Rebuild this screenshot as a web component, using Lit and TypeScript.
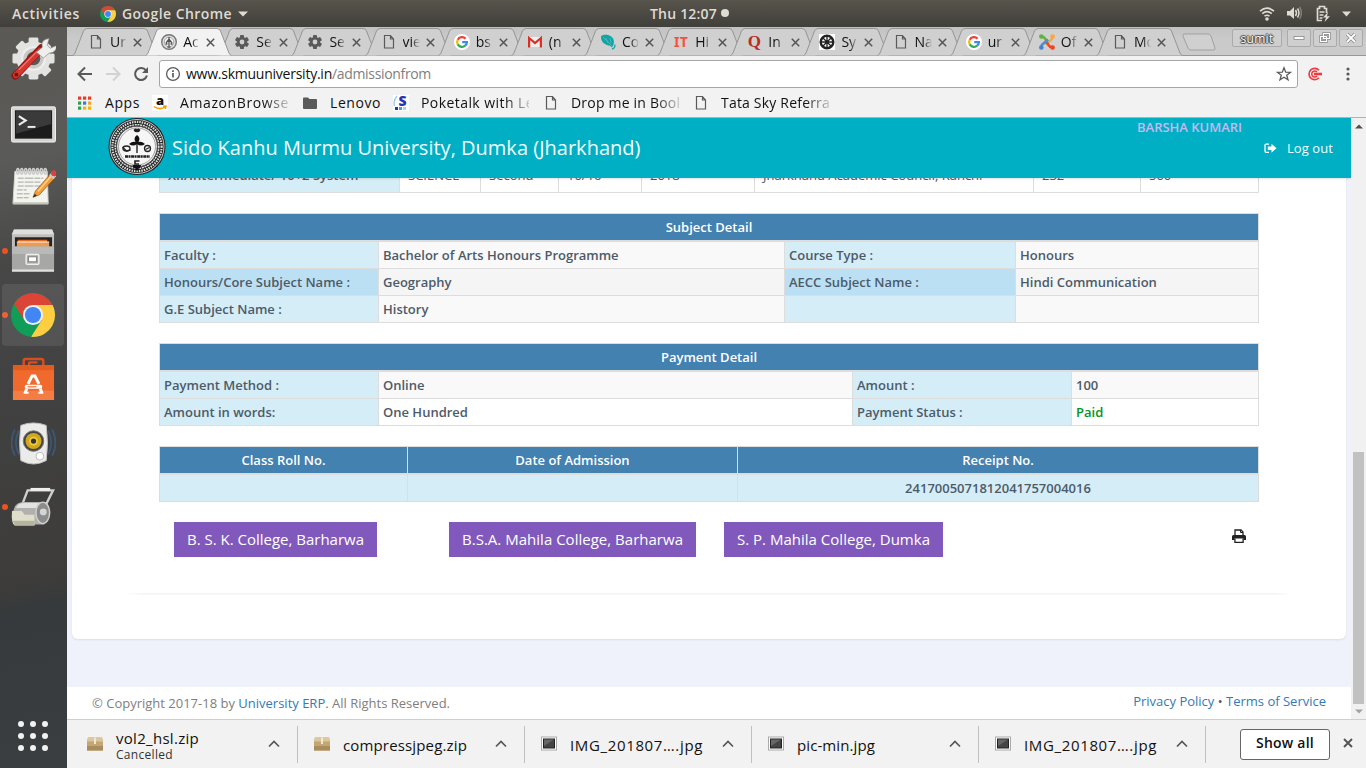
import { LitElement, html, svg, css, nothing } from "lit";
import { customElement, property } from "lit/decorators.js";
import { classMap } from "lit/directives/class-map.js";

/** A single line of text whose tracking is adjusted to fill `w` pixels. */
@customElement("fit-text")
class FitText extends LitElement {
  @property({ type: Number }) w = 0;
  @property() text = "";
  static styles = css`
    :host { display: block; white-space: pre; flex: none; }
    .t { display: inline-block; }
  `;
  firstUpdated() {
    const el = this.renderRoot.querySelector(".t") as HTMLElement;
    const natural = el.getBoundingClientRect().width;
    if (this.w > 0) el.style.letterSpacing = `${(this.w - natural) / this.text.length}px`;
  }
  render() {
    return html`<span class="t">${this.text}</span>`;
  }
}

const fileIcon = html`<svg width="16" height="16" viewBox="0 0 16 16"><path d="M3.5 1.5h6l3 3.500v9h-9zM9.500 1.500v3.500h3" fill="none" stroke="#5a5a5a" stroke-width="1.2"/></svg>`;
const gearIcon = html`<svg width="16" height="16" viewBox="0 0 16 16"><g fill="#5a5a5a"><circle cx="8" cy="8" r="5.200"/>${[0, 60, 120].map((a) => svg`<rect x="6" y="1" width="4" height="14" rx=".8" transform="rotate(${a} 8 8)"/>`)}</g><circle cx="8" cy="8" r="2.400" fill="#d0d0d0"/></svg>`;
const googleIcon = html`<svg width="16" height="16" viewBox="0 0 16 16"><circle cx="8" cy="8" r="8" fill="#fff"/><g fill="none" stroke-width="2.300"><path d="M11.500 4.600A4.900 4.900 0 0 0 3.700 5.700" stroke="#ea4335"/><path d="M3.700 5.700a4.900 4.900 0 0 0 0 4.600" stroke="#fbbc05"/><path d="M3.700 10.300a4.900 4.900 0 0 0 7.500 1.400" stroke="#34a853"/><path d="M11.200 11.700A4.800 4.800 0 0 0 12.900 8.200H8.200" stroke="#4285f4"/></g></svg>`;
const gmailIcon = html`<svg width="16" height="16" viewBox="0 0 16 16"><path d="M2 3h12v10H2z" fill="#eee"/><path d="M2.100 13.500V4L8 9l5.900-5v9.500" fill="none" stroke="#d93025" stroke-width="2.200"/></svg>`;
const leafIcon = html`<svg width="16" height="16" viewBox="0 0 16 16"><path d="M1 2C5-.5 12 1 13.500 5.500c1 3 0 6-1.500 8C10 11 8.500 12 6 10.500 2 8.500 1 6 1 2z" fill="#10a5a5"/><path d="M14.800 10.500c.6 2-.5 4-2.800 4.500" stroke="#10a5a5" stroke-width="1.300" fill="none"/><path d="M3 3l9 9M6 4l2 5M10 4l1 5" stroke="#5cc0c0" fill="none" stroke-width=".7"/></svg>`;
const emblemIcon = html`<svg width="16" height="16" viewBox="0 0 16 16"><circle cx="8" cy="8" r="7.300" fill="#ddd" stroke="#777" stroke-width="1.400"/><circle cx="8" cy="8" r="4.800" fill="#f4f4f4" stroke="#999" stroke-width=".8"/><path d="M8 3v9M5 9l3-4 3 4M4.500 10h2M9.500 10h2M6.500 13h3" stroke="#555" stroke-width="1.300" fill="none"/></svg>`;
const wheelIcon = html`<svg width="16" height="16" viewBox="0 0 16 16"><path fill="#fff" d="M0 0h16v16H0z"/><circle cx="8" cy="8" r="6.300" fill="#fff" stroke="#222" stroke-width="2.400"/><circle cx="8" cy="8" r="1.800" fill="#333"/><path d="M8 2v12M2 8h12M4 4l8 8M12 4l-8 8" stroke="#222" stroke-width="1.300"/></svg>`;
const joomlaIcon = html`<svg width="16" height="16" viewBox="0 0 16 16"><g fill="none" stroke-width="2.600"><path d="M2.500 3c3-1 3 1.500 5 3.500l2.500 2.500" stroke="#5fb346"/><path d="M13.500 3c0 3-1.500 2.500-4 5L7 10.500" stroke="#f9a541"/><path d="M13.500 13c-3 1-3.500-1.500-5-3.500L5.500 7" stroke="#f44321"/><path d="M2.500 13c-.5-3 1.500-3 4-5L9 5.500" stroke="#5091cd"/></g><circle cx="2.300" cy="2.500" r="2.300" fill="#5fb346"/><circle cx="13.600" cy="2.500" r="2.300" fill="#f9a541"/><circle cx="13.600" cy="13.500" r="2.300" fill="#f44321"/><circle cx="2.300" cy="13.500" r="2.300" fill="#4a80d0"/></svg>`;
const itIcon = html`<span class="glyph it">IT</span>`;
const quoraIcon = html`<span class="glyph quora">Q</span>`;

const chrome = (s: number) => html`<svg width=${s} height=${s} viewBox="0 0 48 48">
  <circle cx="24" cy="24" r="24" fill="#0f9d58"/>
  <path d="M24 24L3.200 12A24 24 0 0 1 44.800 12.500L46 13H24z" fill="#db4437"/>
  <path d="M24 13h21.300A24 24 0 0 1 24 48l-2-.2L34 29z" fill="#ffcd40"/>
  <path d="M3.200 12L14.500 29.500 24 24z" fill="#db4437"/>
  <circle cx="24" cy="24" r="11" fill="#f1f1f1"/><circle cx="24" cy="24" r="8.800" fill="#4285f4"/></svg>`;

const tabs = [
  { t: "Ur", icon: fileIcon }, { t: "Ac", icon: emblemIcon, active: true }, { t: "Se", icon: gearIcon }, { t: "Se", icon: gearIcon },
  { t: "vie", icon: fileIcon }, { t: "bs", icon: googleIcon }, { t: "(n", icon: gmailIcon }, { t: "Co", icon: leafIcon },
  { t: "Hi", icon: itIcon }, { t: "In", icon: quoraIcon }, { t: "Sy", icon: wheelIcon }, { t: "Na", icon: fileIcon },
  { t: "ur", icon: googleIcon }, { t: "Of", icon: joomlaIcon }, { t: "Mo", icon: fileIcon },
];

@customElement("desktop-bar")
class DesktopBar extends LitElement {
  static styles = css`
    :host { display: grid; grid-template-columns: 1fr auto 1fr; align-items: center; height: 27px; background: linear-gradient(#57544c, #403f3a);
      color: #dfdbd2; font: 600 14px/26px "Open Sans", "Noto Sans", sans-serif; }
    .left { display: flex; align-items: center; padding-left: 12px; }
    .app { display: flex; align-items: center; gap: 6px; margin-left: 20px; }
    .clock { display: flex; align-items: center; gap: 4px; padding-left: 13px; }
    .dot { width: 8px; height: 8px; border-radius: 4px; background: #dfdbd2; margin-top: -1px; }
    .right { display: flex; align-items: center; justify-content: flex-end; gap: 12px; padding-right: 15px; }
    svg { display: block; }
    .vol { margin-left: -1px; }
    .bat { margin-left: 1px; }
    .tri { margin-left: -1px; }
  `;
  render() {
    return html`
      <div class="left"><fit-text w="68" text="Activities"></fit-text>
        <div class="app">${chrome(16)}<fit-text w="110" text="Google Chrome"></fit-text>
          <svg width="10" height="6"><path d="M0 .5h10L5 5.500z" fill="#dfdbd2"/></svg></div></div>
      <div class="clock"><fit-text w="67" text="Thu 12:07"></fit-text><span class="dot"></span></div>
      <div class="right">
        <svg width="16" height="16" viewBox="0 0 16 16" fill="none" stroke="#dfdbd2" stroke-width="1.600"><path d="M1 5.200Q8-.8 15 5.200"/><path d="M3.200 7.700Q8 3.400 12.800 7.700"/><path d="M5.500 10.200Q8 8.200 10.500 10.200"/><circle cx="8" cy="13" r="1.800" fill="#dfdbd2" stroke="none"/></svg>
        <svg class="vol" width="16" height="16" viewBox="0 0 16 16"><path d="M1 5h3l4-4v12L4 9.500H1z" fill="#dfdbd2"/><g fill="none" stroke="#dfdbd2" stroke-width="1.500"><path d="M9.500 4q2 3 0 6"/><path d="M11.500 2.500q3 4.500 0 9"/><path d="M13.500 1q3.800 6 0 12" opacity=".35"/></g></svg>
        <svg class="bat" width="16" height="17" viewBox="0 0 16 17"><path d="M7 15.500H2.500V3.500h2v-2h5v2h2V8M4.500 7h5M4.500 10h4M4.500 13h3" fill="none" stroke="#dfdbd2" stroke-width="1.700"/><path d="M13 7l-5 5.500h3L9.500 17l5.500-5.700h-3z" fill="#dfdbd2"/></svg>
        <svg class="tri" width="9" height="6"><path d="M0 .5h9L4.500 5.500z" fill="#dfdbd2"/></svg>
      </div>`;
  }
}

@customElement("app-dock")
class AppDock extends LitElement {
  static styles = css`
    :host { display: flex; flex-direction: column; width: 67px; flex: none; background: linear-gradient(168deg, #5a5955 0%, #5a5a58 18%, #474747 32%, #414141 50%, #3d3c3a 74%, #363a3c 78%, #3a3e40 100%); }
    .item { display: flex; align-items: center; height: 64px; flex: none; }
    .mark { width: 6px; height: 6px; border-radius: 3px; margin-left: 2px; }
    .on { background: #e95420; }
    .tile { display: flex; align-items: center; justify-content: center; width: 62px; height: 62px; margin-left: -6px; border-radius: 4px; }
    .active { background: rgba(255, 255, 255, .09); }
    .grid { display: grid; grid-template-columns: repeat(3, 6px); gap: 6px; margin: auto 0 17px 18px; }
    .pt { width: 6px; height: 6px; border-radius: 3px; background: #f2f2f2; }
    svg { display: block; }
  `;
  icons = [
    { s: svg`<g fill="#e3e3e1">${[0, 45, 90, 135].map((a) => svg`<rect x="18" y="1" width="10" height="43" rx="1.500" transform="rotate(${a} 23 22.500)"/>`)}<circle cx="23" cy="22.500" r="17.500"/></g><circle cx="23" cy="22.500" r="11.500" fill="#c9c9c7" stroke="#efefed" stroke-width="2"/><circle cx="23" cy="22.500" r="7" fill="#5a5956"/><path d="M4.500 40L31 12" stroke="#8e1512" stroke-width="8" stroke-linecap="round"/><path d="M5 39.500L29.500 14.500" stroke="#d43630" stroke-width="6" stroke-linecap="round"/><path d="M8 34L27 15" stroke="#ee7770" stroke-width="1.300"/><path d="M26 16l6-5q-2-8 7-9l-2 7 3 3 7-3q-1 8-8 8l-6 5z" fill="#eeeeec" stroke="#888" stroke-width=".7"/><circle cx="5.500" cy="39" r="2" fill="#7d0f0d"/>` },
    { s: svg`<rect x=".5" y="6.500" width="45" height="36" rx="1.500" fill="#d5d5d4" stroke="#f1f1f0"/><rect x="4" y="10" width="38" height="29" fill="#1c1c1c"/><path d="M5 11h36v13L5 34z" fill="#3a3a3a"/><path d="M8 16l7 4.500-7 4.500" fill="none" stroke="#eee" stroke-width="2.200"/><path d="M17 27h8" stroke="#eee" stroke-width="2"/>` },
    { s: svg`<path d="M4 7h33l1 33H2z" fill="#f4f4ee" stroke="#d5d5cb"/><path d="M2 38.500h36V41H2z" fill="#c4c4ba"/><path d="M7 14h26M7 18h23M7 22h25M6 26h10M6 30h13M6 34h12" stroke="#999" stroke-width=".9" stroke-dasharray="6 1 9 1"/><g fill="none" stroke="#ccc" stroke-width="1.700">${[7, 11, 15, 19, 23, 27, 31, 35].map((x) => svg`<ellipse cx=${x} cy="7" rx="1.200" ry="2.800"/>`)}</g><path d="M25 27L40 10l4.500 4L29 31l-6.500 2.500z" fill="#f29b37" stroke="#9a5b13" stroke-width=".7"/><path d="M27.500 27.500L41 12" stroke="#ffd293" stroke-width="1.500"/><path d="M39 11l3-3.500 4.500 4-3 3.500z" fill="#c9c9cf"/><circle cx="44" cy="9" r="3" fill="#e23c40"/><path d="M22.300 33.800l2-4 2.200 2.200z" fill="#333"/>` },
    { on: true, s: svg`<path d="M3 1h39l2 5v38H1V6z" fill="#bfbfbd"/><path d="M3 1h39l2 5H1z" fill="#dededc"/><path d="M4 9h38v11H4z" fill="#2a2220"/><path d="M7 11.500h30V20H7z" fill="#e66b25"/><path d="M6 14h33v6H6z" fill="#f09a4d"/><path d="M6 13.800h33" stroke="#fff" stroke-width="1.200"/><path d="M1 18.500h43V44H1z" fill="#a7a7a5"/><path d="M1 18.500h43V26H1z" fill="#b9b9b7"/><path d="M1 43h43" stroke="#e1e1df" stroke-width="2"/><rect x="15.500" y="26.500" width="13" height="10" rx="1" fill="none" stroke="#eee" stroke-width="1.500"/><rect x="18" y="29" width="8" height="5" fill="#fff" stroke="#777" stroke-width=".8"/>` },
    { on: true, active: true, chrome: true },
    { s: svg`<path d="M13 13V4.500Q13 2.500 15 2.500H31Q33 2.500 33 4.500V13M18.500 13V7Q18.500 6 20 6h7" fill="none" stroke="#d94d1e" stroke-width="2.500"/><path d="M2 9h42v35.500H2z" fill="#f06a2e"/><path d="M2 9h42v5H2z" fill="#e25c22"/><path d="M2 35h42v9.500H2z" fill="#f58450" opacity=".7"/><path d="M17.500 28L21.500 20h3L28.500 28M16 33l-1.500 4M30 33l1.500 4" fill="none" stroke="#fff" stroke-width="3"/><path d="M13 37h5M28 37h5" stroke="#fff" stroke-width="2"/><rect x="14" y="29" width="18" height="4" rx="2" fill="#fff"/><path d="M17 31h9" stroke="#f06a2e" stroke-width="1.200"/>` },
    { s: svg`<g fill="none" stroke="#3b5f85" stroke-width="1.800" opacity=".75"><path d="M4 9q-7 14 0 27M8 10q-6 12 0 25M42 9q7 14 0 27M38 10q6 12 0 25"/></g><path d="M10 5Q23 0 36 5Q38.500 23 36 41Q23 48 10 41Q7.500 23 10 5z" fill="#ebebe9" stroke="#c1c1bf"/><circle cx="23" cy="21" r="10.500" fill="#444" stroke="#777"/><circle cx="23" cy="21" r="8.200" fill="#cfa91d"/><circle cx="23" cy="21" r="4.500" fill="#f0cd3f"/><circle cx="23" cy="21" r="2.700" fill="#333"/><circle cx="29.500" cy="36.500" r="4" fill="#fff" stroke="#bbb"/>` },
    { on: true, s: svg`<path d="M12 19L17 6h26L34 24" fill="none" stroke="#cfcfcf" stroke-width="2.400"/><path d="M20 5h20" stroke="#efefef" stroke-width="3"/><path d="M3 25Q5 18 13 18h21v23H4Q-1 35 3 25z" fill="#b0b0ae"/><path d="M7 21q2-2 6-2h18v5H5z" fill="#e2e2e0"/><ellipse cx="32.500" cy="29" rx="7" ry="11" fill="#8c8c8c" stroke="#cfcfcf" stroke-width="1.500"/><circle cx="33" cy="28" r="3.500" fill="#d5d5d5"/><path d="M1 27h10l3 4h10v11H4Q0 40 1 27z" fill="#dedecb"/><path d="M2 37h22v5H4z" fill="#b5b59f"/>` },
  ] as Array<any>;
  render() {
    return html`
      ${this.icons.map((i) => html`<div class="item">
        <span class=${classMap({ mark: true, on: !!i.on })}></span>
        <span class=${classMap({ tile: true, active: !!i.active })}>${i.chrome ? chrome(44) : html`<svg width="45" height="46" viewBox="0 0 46 46">${i.s}</svg>`}</span>
      </div>`)}
      <div class="grid">${Array.from({ length: 9 }, () => html`<span class="pt"></span>`)}</div>`;
  }
}

@customElement("browser-chrome")
class BrowserChrome extends LitElement {
  static styles = css`
    :host { display: block; background: #f2f2f2; font: 14px/20px "Open Sans", "Noto Sans", sans-serif; color: #111; }
    svg { display: block; flex: none; }
    .strip { display: flex; height: 28px; background: linear-gradient(#c2c2c2, #cacaca 12px, #cbcbcb); border-bottom: 1px solid #979797; padding-left: 5px; }
    .tab { position: relative; display: flex; align-items: center; box-sizing: border-box; width: 87px; height: 28px; margin-right: -13.860px; padding: 2px 0 0 16px; flex: none; }
    .tab.active { height: 29px; z-index: 30; padding-bottom: 1px; }
    .shape { position: absolute; left: 0; top: 0; }
    .ico { position: relative; display: flex; width: 16px; height: 16px; justify-content: center; align-items: center; }
    .label { position: relative; width: 17px; margin: 0 6px 0 6px; overflow: hidden; font-size: 14px; white-space: nowrap; -webkit-mask-image: linear-gradient(90deg, #000 50%, transparent); mask-image: linear-gradient(90deg, #000 50%, transparent); }
    .close { position: relative; }
    .glyph { font: 700 14px/16px "Noto Sans", sans-serif; }
    .it { color: #f9503c; letter-spacing: .3px; }
    .quora { font: 700 17px/16px "Liberation Serif", serif; color: #b92b27; }
    .newtab { margin: 6px 0 0 12px; }
    .wm { display: flex; gap: 2px; margin: 2px 3px 0 auto; }
    .btn { display: flex; align-items: center; justify-content: center; box-sizing: border-box; width: 24px; height: 18px; border: 1px solid #aaa; border-radius: 2px; background: #cfcfcf; }
    .user { width: 50px; margin-right: 3px; font-size: 12px; line-height: 17px; color: #fff; text-shadow: 0 0 1px #444, 1px 0 1px #444, -1px 0 1px #444, 0 1px 1px #444, 0 -1px 1px #444; }
    .nav { display: flex; align-items: center; height: 36px; padding: 0 0 0 10px; gap: 12px; }
    .url { display: flex; align-items: center; box-sizing: border-box; width: 1139px; flex: none; height: 28px; margin-left: -2px; border: 1px solid #a6a6a6; border-radius: 3px; background: #fff; padding: 0 5px; }
    .host { margin-left: 5px; }
    .path { color: #808080; }
    .grow { flex: 1; }
    .ext { margin-left: -3px; }
    .more { margin-left: 5px; }
    .marks { display: flex; height: 25px; align-items: center; padding-left: 10px; border-bottom: 1px solid #b3b1af; }
    .bm { display: flex; gap: 12px; align-items: center; height: 20px; flex: none; padding-bottom: 3px; }
    .clip { overflow: hidden; width: 108px; -webkit-mask-image: linear-gradient(90deg, #000 78%, rgba(0,0,0,.2)); mask-image: linear-gradient(90deg, #000 78%, rgba(0,0,0,.2)); }
    .n { width: 75px; } .m { width: 91px; } .l { width: 150px; }
  `;
  marks = [
    { c: "n", t: "Apps", w: 35, icon: html`<svg width="16" height="16" viewBox="0 0 16 16">${["#ea3b24", "#ea3b24", "#ea3b24", "#2f9e4f", "#3b78e7", "#f5a623", "#2f9e4f", "#f5b400", "#f5b400"].map((c, i) => svg`<rect x=${1 + (i % 3) * 5} y=${1.5 + Math.floor(i / 3) * 5} width="3.200" height="3.200" fill=${c}/>`)}</svg>` },
    { c: "l", t: "AmazonBrowse", w: 109, clip: true, icon: html`<svg width="16" height="16" viewBox="0 0 16 16"><path fill="#fff" d="M0 0h16v16H0z"/><text x="4" y="10" font-family="Open Sans" font-weight="800" font-size="13" fill="#111">a</text><path d="M2 11.500q6 4 11 .5M11 11.200l3-.2-.8 3" fill="none" stroke="#f90" stroke-width="1.500"/></svg>` },
    { c: "m", t: "Lenovo", w: 51, icon: html`<svg width="16" height="16" viewBox="0 0 16 16"><path d="M1 3.500Q1 2.500 2 2.500h4l1.500 1.500H14q1 0 1 1v8q0 1-1 1H2q-1 0-1-1z" fill="#5a5a5a"/></svg>` },
    { c: "l", t: "Poketalk with Le", w: 113, clip: true, icon: html`<svg width="16" height="16" viewBox="0 0 16 16"><path fill="#fff" d="M0 0h16v16H0z"/><path d="M4 1Q0 5 1.500 11" fill="none" stroke="#9cc8ee" stroke-width="1.300"/><text x="5.500" y="11" font-family="Open Sans" font-weight="800" font-size="14" fill="#2632b8">S</text><path d="M2 12h3v3H2z" fill="#2632b8"/><path d="M6 12h3v3H6z" fill="#4a9ade"/><path d="M10 12h3v3h-3z" fill="#a8d4f4"/></svg>` },
    { c: "l", t: "Drop me in Book", w: 113, clip: true, icon: fileIcon },
    { c: "l", t: "Tata Sky Referra", w: 109, clip: true, icon: fileIcon },
  ];
  render() {
    return html`
      <div class="strip">
        ${tabs.map((t: any) => html`<div class=${classMap({ tab: true, active: !!t.active })}>
          <svg class="shape" width="87" height="29" viewBox="0 0 87 29"><path d="M.5 28.500Q2 28 3 26L11.500 4Q13 1.500 15 1.500H72Q74.500 1.500 75.500 4L84 26Q85 28 86.500 28.500" fill=${t.active ? "#f2f2f2" : "#d0d0d0"} stroke="#959595" stroke-width="1"/></svg>
          <span class="ico">${t.icon}</span><span class="label">${t.t}</span>
          <svg class="close" width="9" height="9"><path d="M.8.8l7.400 7.400M8.200.8L.8 8.200" stroke="#555" stroke-width="1.500"/></svg>
        </div>`)}
        <svg class="newtab" width="36" height="18"><path d="M3 1h24q2 0 3 2l4 12q0 2-1 2H10q-2 0-3-2L2 3q-.5-2 1-2z" fill="#d0d0d0" stroke="#a0a0a0"/></svg>
        <div class="wm">
          <span class="btn user"><fit-text w="33" text="sumit"></fit-text></span>
          <span class="btn"><svg width="12" height="6"><rect x="1" y="1.500" width="10" height="3" fill="#fff" stroke="#888" stroke-width=".8"/></svg></span>
          <span class="btn"><svg width="13" height="12"><path d="M4.500 1.500h6v5h-6zM1.500 4.500h6v5h-6z" fill="none" stroke="#888" stroke-width="2.600"/><path d="M4.500 1.500h6v5h-6zM1.500 4.500h6v5h-6z" fill="none" stroke="#fff" stroke-width="1.200"/></svg></span>
          <span class="btn"><svg width="12" height="12"><path d="M2 2l8 8M10 2l-8 8" stroke="#888" stroke-width="3.400"/><path d="M2 2l8 8M10 2l-8 8" stroke="#fff" stroke-width="1.800"/></svg></span>
        </div>
      </div>
      <div class="nav">
        <svg width="16" height="16" viewBox="0 0 16 16"><path d="M15 8H2M8 1.500L1.500 8 8 14.500" fill="none" stroke="#5a5a5a" stroke-width="2"/></svg>
        <svg width="16" height="16" viewBox="0 0 16 16"><path d="M1 8h13M8 1.500L14.500 8 8 14.500" fill="none" stroke="#d2d2d2" stroke-width="2"/></svg>
        <svg width="16" height="16" viewBox="0 0 16 16"><path d="M13 4.500A6 6 0 1 0 13.900 9.500" fill="none" stroke="#5a5a5a" stroke-width="2"/><path d="M15 1v6H9z" fill="#5a5a5a"/></svg>
        <div class="url">
          <svg width="16" height="16" viewBox="0 0 16 16"><circle cx="8" cy="8" r="6.400" fill="none" stroke="#5a5a5a" stroke-width="1.300"/><path d="M8 7v4.500M8 4.200v1.700" stroke="#5a5a5a" stroke-width="1.700"/></svg>
          <fit-text class="host" w="146" text="www.skmuuniversity.in"></fit-text><fit-text class="path" w="99" text="/admissionfrom"></fit-text>
          <span class="grow"></span>
          <svg width="16" height="16" viewBox="0 0 16 16"><path d="M8 1.800l1.700 4.400 4.700.2-3.700 2.900 1.300 4.500L8 11.200l-4 2.600 1.300-4.500L1.600 6.400l4.700-.2z" fill="none" stroke="#5a5a5a" stroke-width="1.300"/></svg>
        </div>
        <svg class="ext" width="16" height="16" viewBox="0 0 16 16"><g fill="none" stroke="#ef3b40"><path d="M12 4.200A5.700 5.700 0 1 0 12 11.800" stroke-width="1.700"/><path d="M10 6A3 3 0 1 0 10 10" stroke-width="1.500"/><path d="M7 8h8" stroke-width="2.600"/></g></svg>
        <svg class="more" width="16" height="16"><g fill="#5a5a5a"><circle cx="8" cy="3" r="1.600"/><circle cx="8" cy="8" r="1.600"/><circle cx="8" cy="13" r="1.600"/></g></svg>
      </div>
      <div class="marks">${this.marks.map((b) => html`<div class="bm ${b.c}">${b.icon}<span class=${b.clip ? "clip" : ""}><fit-text w=${b.w} text=${b.t}></fit-text></span></div>`)}</div>`;
  }
}

@customElement("university-page")
class UniversityPage extends LitElement {
  static styles = css`
    :host { display: flex; flex-direction: column; flex: 1; min-width: 0; overflow: hidden; background: #eff2fb; font: 13px/18px "Open Sans", "Noto Sans", sans-serif; color: #4d5b69; }
    svg { display: block; flex: none; }
    .head { position: relative; z-index: 2; display: flex; height: 60px; flex: none; box-sizing: border-box; background: #00afc4; color: #f3feff; padding: 0 18px 0 41px; box-shadow: 0 1px 2px rgba(0, 0, 0, .12); }
    .title { margin: 16px 0 0 6px; font-size: 20px; line-height: 28px; }
    .account { margin-left: auto; display: flex; flex-direction: column; }
    .name { color: #c5b9f0; font-weight: 600; }
    .out { display: flex; align-items: center; gap: 10px; margin: 3px 0 0 127px; }
    .card { flex: none; height: 473px; margin: -12px 5px 0; border-radius: 0 0 6px 6px; background: #fff; box-shadow: 0 1px 2px rgba(60, 70, 60, .12); box-sizing: border-box; padding: 0 54px 0 54px; }
    .tbl { margin: 0 33px 20px; display: grid; border-left: 1px solid #ddd; border-top: 1px solid #ddd; font-weight: 600; }
    .prev { border-top: 0; font-weight: 400; grid-template-columns: 240px 81px 78px 83px 113px 279px 107px 118px; }
    .subj { grid-template-columns: 219px 406px 231px 243px; }
    .pay { grid-template-columns: 219px 474px 219px 187px; }
    .rcpt { grid-template-columns: 248px 330px 521px; }
    .c { box-sizing: border-box; height: 27px; padding: 4px 4px; border-right: 1px solid #ddd; border-bottom: 1px solid #ddd; white-space: nowrap; overflow: hidden; }
    .prev .c { padding: 0 8px; }
    .h { height: 28px; border-bottom-width: 2px; background: #4381b1; color: #fff; text-align: center; }
    .wide { grid-column: 1 / -1; }
    .k { background: #d5edf7; }
    .b { font-weight: 600; }
    .k2 { background: #bce0f3; }
    .g { background: #f9f9f9; } .g2 { background: #f5f5f5; }
    .mid { text-align: center; }
    .paid { color: #07921d; }
    .links { display: flex; margin-left: 48px; padding-right: 45px; height: 35px; align-items: flex-start; }
    .slot { width: 275px; }
    .cta { display: inline-block; background: #8159bc; color: #fff; font-size: 15px; line-height: 35px; padding: 0 13px; }
    .print { margin: 7px 1px 0 auto; }
    .hr { height: 2px; margin: 36px 0 0; background: linear-gradient(90deg, #fff, transparent 1.500%, transparent 98.500%, #fff), linear-gradient(#f1f1f1, #fafafa); }
    .foot { display: flex; justify-content: space-between; height: 32px; margin-top: auto; padding: 0 25px; background: #fff; color: #808080; line-height: 32px; }
    .legal { line-height: 29px; color: #555; }
    a { color: #337ab7; text-decoration: none; }
    .cta { color: #fff; }
  `;
  render() {
    const c = (cls: string, t: unknown = nothing) => html`<div class="c ${cls}">${t}</div>`;
    return html`
      <header class="head">
        <svg width="58" height="58" viewBox="0 0 58 58"><circle cx="29" cy="28.500" r="28.500" fill="#222"/><g fill="none" stroke="#ddd"><circle cx="29" cy="28.500" r="27" stroke-width=".9"/><circle cx="29" cy="28.500" r="24.600" stroke-width="2.200" stroke-dasharray="1.500 1"/><circle cx="29" cy="28.500" r="21.800" stroke-width="1.500" stroke-dasharray="2 .7"/></g><circle cx="29" cy="28.500" r="20.300" fill="#f6f6f6" stroke="#555"/><circle cx="29" cy="28.500" r="18.500" fill="none" stroke="#888" stroke-width=".8"/>
          <path d="M29 19v16" fill="none" stroke="#111" stroke-width="1.300"/><path d="M29 17q4 3 1.500 7 3-1 6.500 2-4 3-8 0-4 3-8 0 3.500-3 6.500-2Q25 20 29 17z" fill="#111"/><path d="M25.500 12q1.500-2.500 3.500-1 2-1.500 3.500 1-1.500 3-3.500 2-2 1-3.500-2z" fill="#222"/>
          <g fill="none" stroke="#222" stroke-width="1.300"><ellipse cx="18.500" cy="30.500" rx="3.500" ry="2.500"/><circle cx="39.500" cy="30.500" r="3"/><path d="M14.500 29l4 4 4-1M37.500 31.500l4-2"/><path d="M17 38.500h25" stroke-width="2.400" stroke-dasharray="3 .5 2 .6"/><path d="M31.500 43H27v3h4" stroke-width="1.600"/></g><path d="M24.500 47h8.500q-.5 3.500-2.500 3.500v2h-3v-2q-2.500 0-3-3.500z" fill="#111"/></svg>
        <fit-text class="title" w="468.500" text="Sido Kanhu Murmu University, Dumka (Jharkhand)"></fit-text>
        <div class="account"><fit-text class="name" w="105" text="BARSHA KUMARI"></fit-text>
          <div class="out"><svg width="13" height="11" viewBox="0 0 13 11"><path d="M5 1.200H2.200Q1 1.200 1 2.500v5.500q0 1.300 1.200 1.300H5" fill="none" stroke="#fff" stroke-width="1.300"/><path d="M3.800 3.500H7.500V.8L12.500 5.300 7.500 9.800V7H3.800z" fill="#fff"/></svg><fit-text w="46" text="Log out"></fit-text></div></div>
      </header>
      <main class="card">
        <div class="tbl prev">${c("k b", "XII/Intermediate/ 10+2 System")}${c("", "SCIENCE")}${c("", "Second")}${c("", "10/16")}${c("", "2018")}${c("", "Jharkhand Academic Council, Ranchi")}${c("", "232")}${c("", "500")}</div>
        <div class="tbl subj">${c("h wide", "Subject Detail")}
          ${c("k", "Faculty :")}${c("g", "Bachelor of Arts Honours Programme")}${c("k", "Course Type :")}${c("g", "Honours")}
          ${c("k2", "Honours/Core Subject Name :")}${c("g2", "Geography")}${c("k2", "AECC Subject Name :")}${c("g2", "Hindi Communication")}
          ${c("k", "G.E Subject Name :")}${c("g", "History")}${c("k")}${c("g")}</div>
        <div class="tbl pay">${c("h wide", "Payment Detail")}
          ${c("k", "Payment Method :")}${c("g", "Online")}${c("k", "Amount :")}${c("g", "100")}
          ${c("k", "Amount in words:")}${c("", "One Hundred")}${c("k", "Payment Status :")}${c("paid", "Paid")}</div>
        <div class="tbl rcpt">${c("h", "Class Roll No.")}${c("h", "Date of Admission")}${c("h", "Receipt No.")}
          ${c("k")}${c("k")}${c("k mid", "2417005071812041757004016")}</div>
        <div class="links">
          <span class="slot"><a class="cta"><fit-text w="177" text="B. S. K. College, Barharwa"></fit-text></a></span>
          <span class="slot"><a class="cta"><fit-text w="221" text="B.S.A. Mahila College, Barharwa"></fit-text></a></span>
          <span class="slot"><a class="cta"><fit-text w="193" text="S. P. Mahila College, Dumka"></fit-text></a></span>
          <svg class="print" width="14" height="14" viewBox="0 0 14 14"><path d="M3 7V1h6l2 2v4" fill="none" stroke="#222" stroke-width="1.300"/><path d="M8.500 1v2.500H11" fill="none" stroke="#222"/><path d="M1.500 6h11Q14 6 14 7.500V11h-2.500V9.500h-9V11H0V7.500Q0 6 1.500 6z" fill="#222"/><path d="M2.900 9.500v3.800h8.200V9.500" fill="none" stroke="#222" stroke-width="1.300"/></svg>
        </div>
        <div class="hr"></div>
      </main>
      <footer class="foot"><span>© Copyright 2017-18 by <a>University ERP</a>. All Rights Reserved.</span><span class="legal"><a>Privacy Policy</a> • <a>Terms of Service</a></span></footer>`;
  }
}

@customElement("downloads-shelf")
class DownloadsShelf extends LitElement {
  static styles = css`
    :host { display: flex; align-items: center; height: 48px; flex: none; border-top: 1px solid #cfcfcf; background: #f2f2f2; padding-left: 4px; font: 15px/20px "Open Sans", "Noto Sans", sans-serif; color: #111; }
    svg { display: block; flex: none; }
    .item { display: flex; align-items: center; box-sizing: border-box; width: 227px; height: 37px; border-right: 1px solid #c0c0c0; padding: 0 17px 0 15px; flex: none; }
    .txt { margin: 1px auto 0 12px; }
    .two { margin-top: 0; }
    .name { line-height: 20px; }
    .sub { font-size: 12px; line-height: 13px; color: #333; }
    .all { display: flex; justify-content: center; box-sizing: border-box; width: 90px; height: 31px; margin-left: 34px; border: 1px solid #666; border-radius: 3px; background: #fff; font-weight: 600; font-size: 14px; line-height: 26px; }
    .x { margin: -2px 0 0 13px; }
  `;
  render() {
    const zip = html`<svg width="18" height="16" viewBox="0 0 18 16"><path d="M2 1.500h14l1 4v9H1v-9z" fill="#c2a675"/><path d="M2 1.500h14l1 4H1z" fill="#dcc69b"/><path d="M1 10h16v4.500H1z" fill="#a98d5d"/><path d="M8 1.500h2V8H8z" fill="#f3e8cf"/></svg>`;
    const img = html`<svg width="18" height="16" viewBox="0 0 18 16"><rect x="1.500" y="1" width="15" height="13" fill="#fff" stroke="#aaa"/><rect x="3.500" y="3" width="11" height="9" fill="#444" stroke="#222"/><path d="M4 3.500h10L4 10z" fill="#666"/></svg>`;
    const items = [
      { i: zip, t: "vol2_hsl.zip", w: 83, sub: true }, { i: zip, t: "compressjpeg.zip", w: 124 }, { i: img, t: "IMG_201807….jpg", w: 133 },
      { i: img, t: "pic-min.jpg", w: 78 }, { i: img, t: "IMG_201807….jpg", w: 133 },
    ];
    return html`${items.map((d) => html`<div class="item">${d.i}
        <div class=${classMap({ txt: true, two: !!d.sub })}><fit-text class="name" w=${d.w} text=${d.t}></fit-text>${d.sub ? html`<fit-text class="sub" w="57" text="Cancelled"></fit-text>` : nothing}</div>
        <svg width="12" height="8"><path d="M1 6.500l5-5 5 5" fill="none" stroke="#555" stroke-width="1.700"/></svg></div>`)}
      <div class="all"><fit-text w="58" text="Show all"></fit-text></div>
      <svg class="x" width="10" height="10"><path d="M1 1l8 8M9 1L1 9" stroke="#555" stroke-width="1.900"/></svg>`;
  }
}

@customElement("app-root")
class AppRoot extends LitElement {
  static styles = css`
    :host { display: flex; flex-direction: column; width: 1366px; height: 768px; overflow: hidden; }
    .desk { display: flex; flex: 1; min-height: 0; }
    .win { display: flex; flex-direction: column; flex: 1; min-width: 0; }
    .view { display: flex; flex: 1; min-height: 0; }
    .scroll { display: flex; flex-direction: column; align-items: center; width: 15px; background: #f1f1f1; flex: none; }
    .up { margin-top: 6px; }
    .thumb { width: 11px; height: 252px; background: #c1c1c1; margin-top: auto; }
    .down { margin: 5px 0 5px; }
    svg { display: block; }
  `;
  render() {
    return html`<desktop-bar></desktop-bar>
      <div class="desk"><app-dock></app-dock>
        <div class="win"><browser-chrome></browser-chrome>
          <div class="view"><university-page></university-page>
            <div class="scroll"><svg class="up" width="8" height="5"><path d="M0 4.500h8L4 .5z" fill="#505050"/></svg><span class="thumb"></span><svg class="down" width="8" height="5"><path d="M0 .5h8L4 4.500z" fill="#a3a3a3"/></svg></div>
          </div>
          <downloads-shelf></downloads-shelf></div></div>`;
  }
}
